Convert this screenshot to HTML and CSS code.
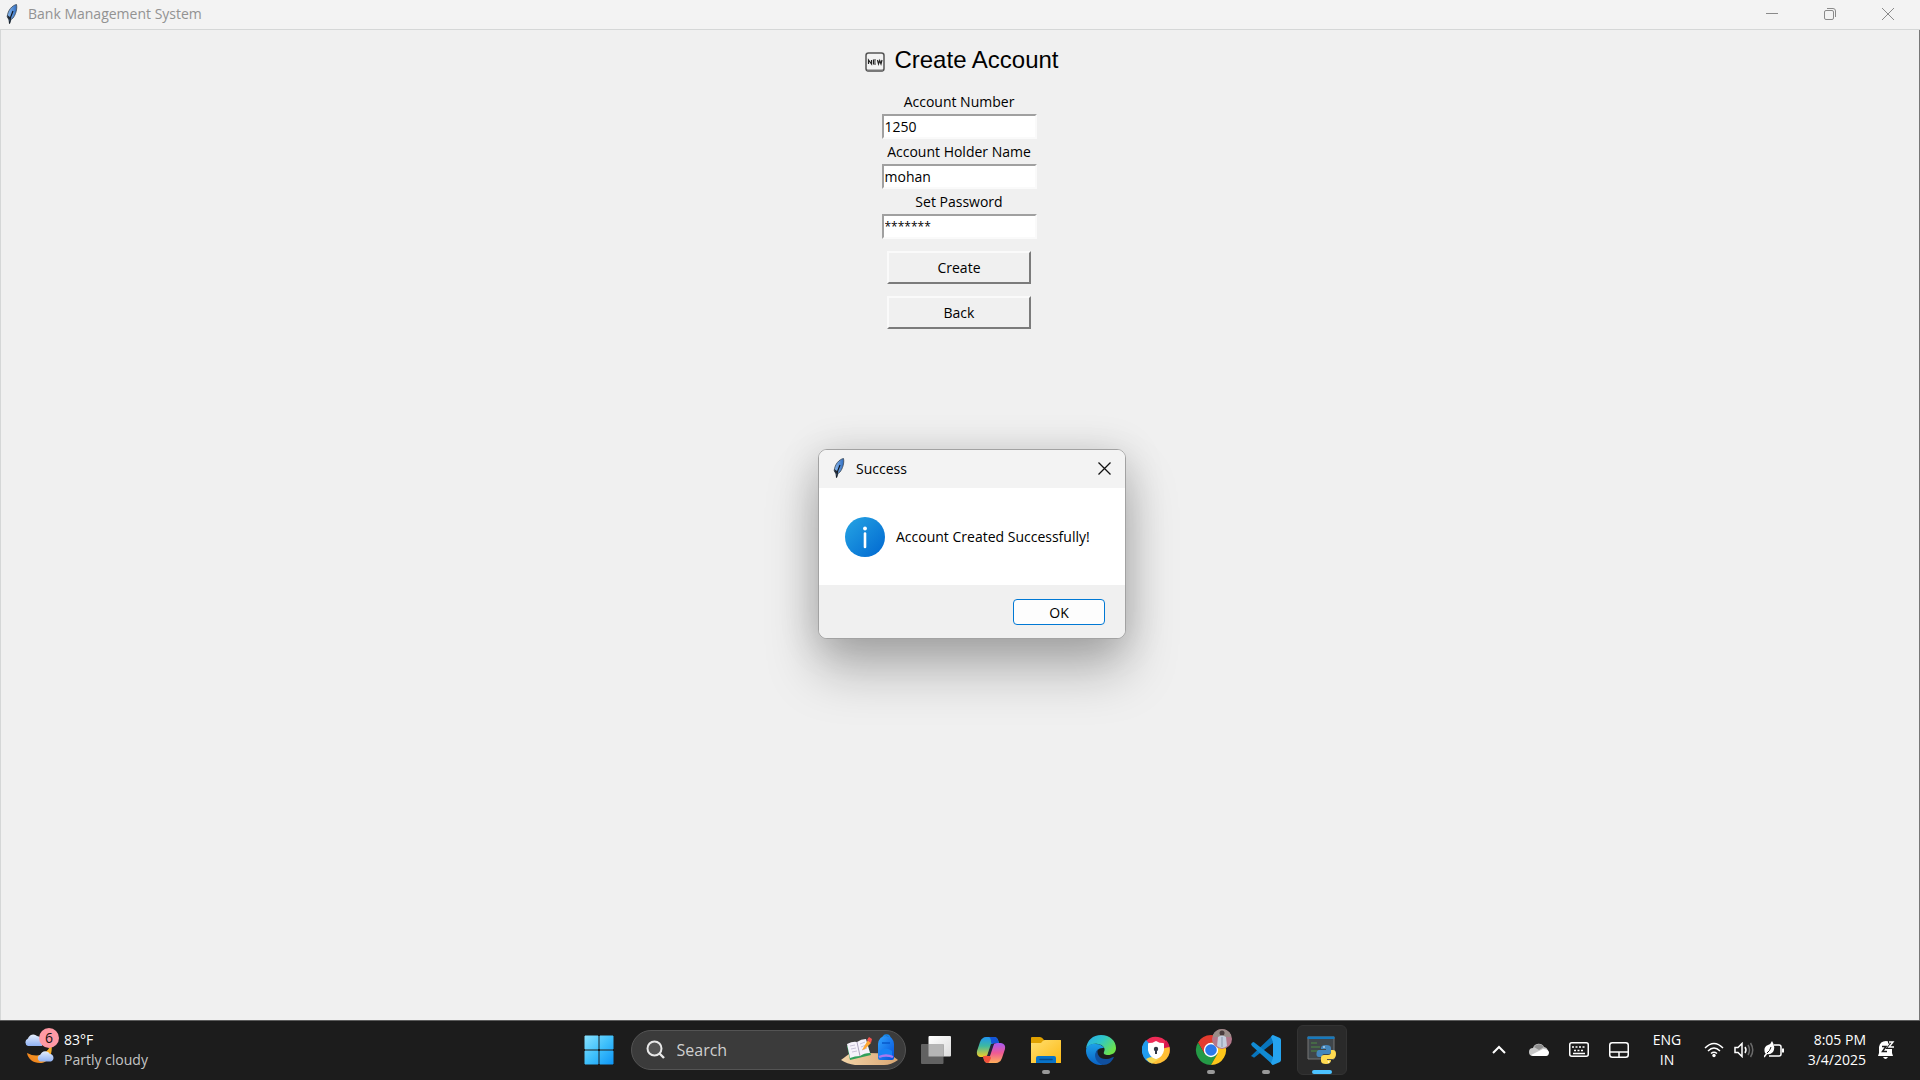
FILE: index.html
```html
<!DOCTYPE html>
<html lang="en">
<head>
<meta charset="utf-8">
<title>Bank Management System</title>
<link rel="stylesheet" href="styles.css">
</head>
<body>
<svg width="0" height="0" class="defs" aria-hidden="true">
  <defs>
    <linearGradient id="quill" x1="0" y1="0" x2="1" y2="0"><stop offset="0" stop-color="#8dbcf0"/><stop offset="1" stop-color="#2f6cc0"/></linearGradient>
    <symbol id="feather" viewBox="0 0 12 20">
      <path d="M10.500 .5C6 1.500 2 6 1.200 12.500L2.800 15.500 3.500 19.500 5 15.500 7 14C9.500 11 11.500 5 10.500 .5Z" fill="url(#quill)" stroke="#3a4654" stroke-width=".8"/>
      <path d="M7 7C5.500 10 4 14 3.500 19.500" fill="none" stroke="#10161e" stroke-width="1.200"/>
      <path d="M1.200 11 1.500 13.500 3 16 5 15 4 13Z" fill="#222a35"/>
    </symbol>
  </defs>
</svg>

<section class="window">
  <header class="titlebar">
    <svg class="feather" viewBox="0 0 12 20"><use href="#feather"/></svg>
    <span class="titlebar-name">Bank Management System</span>
    <div class="titlebar-controls">
      <button class="control" aria-label="Minimize"><svg width="12" height="12" viewBox="0 0 12 12"><path d="M0 5.500H12" /></svg></button>
      <button class="control" aria-label="Restore"><svg width="12" height="12" viewBox="0 0 12 12"><rect x=".5" y="2.500" width="9" height="9" rx="1.500"/><path d="M3 .5H9Q11.500 .5 11.500 3V9"/></svg></button>
      <button class="control" aria-label="Close"><svg width="12" height="12" viewBox="0 0 12 12"><path d="M0 0 12 12M12 0 0 12"/></svg></button>
    </div>
  </header>

  <main class="client">
    <h1 class="heading">
      <svg width="20" height="20" viewBox="0 0 20 20" aria-hidden="true">
        <rect x="1" y="1" width="18" height="18" rx="2.500" fill="#f3f3f3" stroke="#555" stroke-width="1.500"/>
        <path d="M2 18.500H18" stroke="#777" stroke-width="2"/>
        <path d="M3.500 12V8L6.500 12V8M11 8H8.500V12H11M8.500 10H10.800M12.500 8 13.500 12 14.700 8.500 16 12 17 8" fill="none" stroke="#222" stroke-width="1.200"/>
      </svg>
      <span class="heading-text">Create Account</span>
    </h1>
    <form class="form">
      <label for="number">Account Number</label>
      <input class="entry" id="number" type="text" value="1250">
      <label for="holder">Account Holder Name</label>
      <input class="entry" id="holder" type="text" value="mohan">
      <label for="password">Set Password</label>
      <input class="entry masked" id="password" type="text" value="*******">
      <button class="push" type="button">Create</button>
      <button class="push" type="button">Back</button>
    </form>
  </main>

  <section class="dialog" role="dialog" aria-labelledby="dialog-title">
    <header class="dialog-bar">
      <svg class="feather" viewBox="0 0 12 20"><use href="#feather"/></svg>
      <span id="dialog-title" class="dialog-title">Success</span>
      <button class="dialog-close" aria-label="Close"><svg width="13" height="13" viewBox="0 0 13 13"><path d="M.5 .5 12.500 12.500M12.500 .5 .5 12.500"/></svg></button>
    </header>
    <div class="dialog-body">
      <svg width="40" height="40" viewBox="0 0 40 40" aria-hidden="true">
        <defs><linearGradient id="info" x1="0" y1="0" x2="1" y2="1"><stop offset="0" stop-color="#26a5e4"/><stop offset="1" stop-color="#0067d0"/></linearGradient></defs>
        <circle cx="20" cy="20" r="20" fill="url(#info)"/><circle cx="20" cy="11.500" r="1.900" fill="#fff"/><path d="M20 16.500V30" stroke="#fff" stroke-width="2.600" stroke-linecap="round"/>
      </svg>
      <span>Account Created Successfully!</span>
    </div>
    <footer class="dialog-foot"><button class="ok">OK</button></footer>
  </section>
</section>

<nav class="taskbar">
  <div class="weather">
    <div class="weather-icon">
      <svg width="32" height="32" viewBox="0 0 32 32" aria-hidden="true">
        <defs><linearGradient id="cloud" x1="0" y1="0" x2="0" y2="1"><stop offset="0" stop-color="#e6effd"/><stop offset="1" stop-color="#8fb1f3"/></linearGradient>
        <linearGradient id="moon" x1="1" y1="0" x2="0" y2="1"><stop offset="0" stop-color="#f9c02c"/><stop offset="1" stop-color="#f07a1c"/></linearGradient></defs>
        <path d="M27 7C27 17 16 26 3 19 4 25 9 29 16 29 24 29 30 21 27 7Z" fill="url(#moon)"/>
        <path d="M4 12A4 4 0 0 1 4 4.500 5.500 5.500 0 0 1 13 2 6 6 0 0 1 18 6V12Z" fill="url(#cloud)"/>
        <path d="M16 27.500A3.700 3.700 0 0 1 16.500 20.500 5.200 5.200 0 0 1 26 20 3.900 3.900 0 0 1 27 27.500Z" fill="url(#cloud)"/>
      </svg>
      <span class="badge">6</span>
    </div>
    <div class="weather-text"><span>83°F</span><span class="dim">Partly cloudy</span></div>
  </div>

  <div class="apps">
    <button class="app" aria-label="Start"><svg width="30" height="30" viewBox="0 0 30 30">
      <defs><linearGradient id="win" gradientUnits="userSpaceOnUse" x1="0" y1="0" x2="30" y2="30"><stop offset="0" stop-color="#8be3ff"/><stop offset=".5" stop-color="#3fc0fb"/><stop offset="1" stop-color="#0c93f5"/></linearGradient></defs>
      <path d="M1 1H14V14H1ZM16 1H29V14H16ZM1 16H14V29H1ZM16 16H29V29H16Z" fill="url(#win)" stroke="url(#win)"/>
    </svg></button>
    <div class="search">
      <svg width="20" height="20" viewBox="0 0 20 20" aria-hidden="true"><circle cx="8.500" cy="8.500" r="7" fill="#555" stroke="#e8e8e8" stroke-width="2"/><path d="M13.500 13.500 18 18" stroke="#e8e8e8" stroke-width="2.400"/></svg>
      <input class="search-input" type="text" placeholder="Search" aria-label="Search">
      <svg width="58" height="32" viewBox="0 0 58 32" aria-hidden="true">
        <defs><linearGradient id="sand" x1="0" y1="0" x2="1" y2="0"><stop offset="0" stop-color="#f4d5a8"/><stop offset="1" stop-color="#d8a673"/></linearGradient>
        <linearGradient id="bag" x1="0" y1="0" x2="1" y2="1"><stop offset="0" stop-color="#30a4ff"/><stop offset="1" stop-color="#0550d8"/></linearGradient></defs>
        <path d="M0 26 8 20Q24 18 49 20L57 26Q50 31 43 31H14Q6 30 0 26Z" fill="url(#sand)"/>
        <path d="M6 12 25 7 30 21 9 26Z" fill="#31a05b"/><path d="M6 10Q12 7 16 8 20 5 25 5L29 19Q23 19 19 22 14 22 9 24Z" fill="#f5f2fb"/>
        <path d="M16 8 19 22" stroke="#aaa3bd" fill="none"/><path d="M9 12 14 11M10 15 15 14M11 18 16 17M19 10 24 8M20 13 25 11M21 16 26 14" stroke="#c9c3d8" fill="none"/>
        <path d="M21 16 27 6 30 9 24 15Z" fill="#ffa834"/><path d="M26 6 28 3 31 5 30 9Z" fill="#f2534d"/>
        <path d="M42 5Q42 1 45.500 1T49 5" fill="none" stroke="#168bf1" stroke-width="1.500"/><path d="M37 24V10Q38 2 45 2T53 10V24Q53 26 51 26H39Q37 26 37 24Z" fill="url(#bag)"/>
        <path d="M39 17Q45 12 51 17V22H39Z" fill="#1682f5"/><path d="M38 23Q45 20 52 23" fill="none" stroke="#a978ef" stroke-width="2.400"/><path d="M41 9H49" stroke="#0759ca" stroke-width="1.500"/>
      </svg>
    </div>
    <button class="app" aria-label="Task view"><svg width="30" height="30" viewBox="0 0 30 30">
      <defs><linearGradient id="tv" x1="0" y1="0" x2="1" y2="1"><stop offset="0" stop-color="#fff"/><stop offset="1" stop-color="#dcdcdc"/></linearGradient></defs>
      <rect x="7.500" y="1" width="22.500" height="20.500" rx="1" fill="url(#tv)"/><rect x="0" y="9" width="22.500" height="20" rx="1" fill="#626262"/><path d="M7.500 9H22.500V21.500H7.500Z" fill="#b5b5b5"/>
    </svg></button>
    <button class="app" aria-label="Copilot"><svg width="30" height="30" viewBox="0 0 30 30">
      <defs><linearGradient id="cpa" x1="0" y1="0" x2="0" y2="1"><stop offset="0" stop-color="#2195f2"/><stop offset=".45" stop-color="#3db9a0"/><stop offset="1" stop-color="#f4cc24"/></linearGradient>
      <linearGradient id="cpb" x1="0" y1="0" x2="0" y2="1"><stop offset="0" stop-color="#a65af5"/><stop offset=".5" stop-color="#ef5a94"/><stop offset="1" stop-color="#ffb05a"/></linearGradient></defs>
      <path d="M7 3Q8 2 10 2H18Q21 2 22 5L23 8H19Q16 8 15 11L12 20Q11 22 8 22H4Q0 21 1 16L4 7Q5 4 7 3Z" fill="url(#cpa)"/>
      <path d="M13 2H18Q21 2 22 5L23 8H19Q17 8 16 10L15 7Q15 3 13 2Z" fill="#1455d8"/>
      <path d="M23 27Q22 28 20 28H12Q9 28 8 25L7 21H9Q12 21 13 19L17 10Q18 8 21 8H25Q30 9 29 14L26 23Q25 26 23 27Z" fill="url(#cpb)"/>
      <path d="M7 21H9Q12 21 13 19L15 23Q13 28 12 28 9 28 8 25Z" fill="#f0503c"/><path d="M15 9 18 9 14 21 11 21Z" fill="#22243a"/>
    </svg></button>
    <button class="app running" aria-label="File Explorer"><svg width="30" height="30" viewBox="0 0 30 30">
      <defs><linearGradient id="fold" x1="0" y1="0" x2="1" y2="1"><stop offset="0" stop-color="#ffdf70"/><stop offset="1" stop-color="#fdb913"/></linearGradient></defs>
      <path d="M0 3Q0 2 1 2H9Q11 2 13 5H30V14H0Z" fill="#e0a100"/><path d="M0 8H10Q12 5 14 5H29Q30 5 30 6V28H0Z" fill="url(#fold)"/><path d="M5 28V23Q5 21 7 21H23Q25 21 25 23V28Z" fill="#0873c8"/><path d="M9 24.500H21" stroke="#064b8c" stroke-width="1.500" stroke-linecap="round"/>
    </svg></button>
    <button class="app" aria-label="Edge"><svg width="30" height="30" viewBox="0 0 30 30">
      <defs><linearGradient id="ea" x1="0" y1="0" x2="1" y2=".6"><stop offset="0" stop-color="#27a9ed"/><stop offset=".5" stop-color="#2fc6c7"/><stop offset="1" stop-color="#6de34a"/></linearGradient>
      <linearGradient id="eb" x1="0" y1="0" x2="0" y2="1"><stop offset="0" stop-color="#1ca0e8"/><stop offset="1" stop-color="#0a62c4"/></linearGradient></defs>
      <path d="M0 14C1 5 7 0 15 0 24 0 30 6 30 13 30 18 26 20 22 20 19 20 17 19 18 17 20 13 17 10 12 9 7 8 2 10 0 14Z" fill="url(#ea)"/>
      <path d="M0 16C0 11 5 8 10 9 14 9 17 11 18 13 11 12 8 19 11 24 12 27 15 29 17 30 8 31 0 24 0 16Z" fill="url(#eb)"/>
      <path d="M12 14C10 19 14 25 21 24 24 24 26 22 28 22 26 27 22 30 17 30 10 28 6 20 12 14Z" fill="#104f9e"/>
    </svg></button>
    <button class="app" aria-label="Secure browser"><svg width="28" height="28" viewBox="0 0 28 28">
      <path d="M3 6A14 14 0 0 1 27 10L14 13Z" fill="#ee2b57"/><path d="M24 4A14 14 0 0 1 27 18L20 14Z" fill="#d81850"/><path d="M27.500 11A14 14 0 0 1 7 26L14 14Z" fill="#ffbe35"/><path d="M10 27.500A14 14 0 0 1 4 4L14 14Z" fill="#209cee"/><path d="M4 23Q10 19 17 23L10 27.500Q7 27 4 23Z" fill="#f7d852"/>
      <path d="M7 8Q11 8 14 6 17 8 21 8V14Q20 20 14 22 8 20 7 14Z" fill="#fff" stroke="#fff" stroke-width="2" stroke-linejoin="round"/><circle cx="14" cy="13" r="2.200" fill="#303845"/><path d="M14 13V18" stroke="#303845" stroke-width="2"/>
    </svg></button>
    <button class="app running" aria-label="Chrome"><svg class="profiled" width="30" height="30" viewBox="4 8 30 30">
      <path d="M6 15.500A15 15 0 0 1 32 15.500H19L12.500 26.700Z" fill="#e33b2e"/><path d="M6 15.500A15 15 0 0 0 19 38L25.500 26.700H12.500Z" fill="#249a46"/><path d="M32 15.500A15 15 0 0 1 19 38L25.500 26.700 19 15.500Z" fill="#fdc61a"/>
      <circle cx="19" cy="23" r="7.200" fill="#fff"/><circle cx="19" cy="23" r="5.800" fill="#2b79ea"/>
      <circle cx="30" cy="12" r="10" fill="#b4788b"/><path d="M21 8A10 10 0 0 1 39 8V10H21Z" fill="#9a8d88"/><circle cx="30" cy="6" r="2.500" fill="#493d3d"/><path d="M26 10Q30 7 34 10L35 19Q30 23 25 19Z" fill="#c3cedd"/><path d="M30 10V20" stroke="#8795a9"/>
    </svg></button>
    <button class="app running" aria-label="Visual Studio Code"><svg width="30" height="30" viewBox="0 0 30 30">
      <path d="M1 20 22 0V8L4 22Q3 23 2 22L0 21Z" fill="#0875bd"/><path d="M0 9 2 7Q3 7 4 8L22 22V30L1 11Z" fill="#118bd3"/><path d="M22 0 29 3Q30 4 30 5V25Q30 26 29 27L22 30Q21 30 20 28L22 23V7L20 2Q21 0 22 0Z" fill="#25a3ee"/>
    </svg></button>
    <button class="app running active" aria-label="Python"><svg width="30" height="30" viewBox="0 0 30 30">
      <path d="M1 2H27V24H1Z" fill="#40464a" stroke="#777"/><path d="M.5 1.500H27.500V4H.5Z" fill="#1679bd"/><path d="M4 8H10M4 12H13M4 16H12" stroke="#4d8c42" stroke-width="1.200"/>
      <path d="M14 13Q14 10 19 10T24 13V17Q24 19 22 19H17Q15 19 15 22H12Q9 22 9.500 18 10 15 12 15H19V14H14Z" fill="#4386bd"/><path d="M24 15H26Q29 15 29 19T26 24H20V25H24Q24 29 19 29T14 26V23Q14 20 17 20H21Q24 20 24 17Z" fill="#ffda50"/><circle cx="17" cy="12" r=".8" fill="#fff"/><circle cx="21.500" cy="27" r=".8" fill="#fff"/>
    </svg></button>
  </div>

  <div class="tray">
    <button class="tray-item" aria-label="Show hidden icons"><svg width="14" height="9" viewBox="0 0 14 9"><path d="M1 8 7 2 13 8" class="line heavy"/></svg></button>
    <button class="tray-item" aria-label="OneDrive"><svg width="20" height="14" viewBox="0 0 20 14"><path d="M4 13A4 4 0 0 1 4 5 6 6 0 0 1 15 4 5 5 0 0 1 17 13Z" fill="#c8c8c8"/><path d="M5 4A6 6 0 0 1 15 4L10 7Z" fill="#8f8f8f"/><path d="M2 12 14 6Q19 6 20 9 20 13 17 13H4Z" fill="#fff"/></svg></button>
    <button class="tray-item" aria-label="Touch keyboard"><svg width="20" height="15" viewBox="0 0 20 15"><rect x=".75" y=".75" width="18.500" height="13.500" rx="2" class="line"/><path d="M3 5H17" class="line" stroke-dasharray="2 1.500"/><path d="M5 8.500H15" class="line" stroke-dasharray="2 1.500"/><path d="M4 11.500H16" class="line"/></svg></button>
    <button class="tray-item" aria-label="Touchpad"><svg width="20" height="16" viewBox="0 0 20 16"><rect x=".75" y=".75" width="18.500" height="14.500" rx="2.500" class="line"/><path d="M1 10H19M10 10V15" class="line"/></svg></button>
    <button class="language"><span>ENG</span><span>IN</span></button>
    <button class="status" aria-label="Network, sound and battery">
      <svg width="20" height="16" viewBox="0 0 20 16"><path d="M1 6Q10-3 19 6M4 9Q10 3 16 9M7 11.500Q10 9 13 11.500" class="line"/><circle cx="10" cy="13.500" r="1.700" fill="#fff"/></svg>
      <svg width="20" height="16" viewBox="0 0 20 16"><path d="M1 5.500H4L8 1.500V14.500L4 10.500H1Z" class="line"/><path d="M11 5Q13 8 11 11" class="line"/><path d="M14 3Q17 8 14 13M16.500 1Q21 8 16.500 15" class="line faint"/></svg>
      <svg width="20" height="17" viewBox="0 0 20 17"><path d="M10 4H15Q17 4 17 6V13Q17 15 15 15H5" class="line"/><path d="M18 7.500H20V11.500H18Z" fill="#fff"/><path d="M8 0Q12 6 9 11 5 15 1 12-1 6 4 4 7 3 8 0Z" fill="#fff"/><path d="M3 12Q6 10 7 6" stroke="#1c1c1c" fill="none"/><path d="M0 16 3 12" class="line"/></svg>
    </button>
    <button class="clock"><span>8:05 PM</span><span>3/4/2025</span></button>
    <button class="bell" aria-label="Notifications"><svg width="18" height="20" viewBox="0 0 18 20"><path d="M1 16 2 13V7Q3 1 9 1T15 7V13L16 16Z" fill="#fff"/><path d="M6 17Q8.500 21 11 17Z" fill="#fff"/><path d="M11 2H16L11.500 7.500H17" fill="none" stroke="#1c1c1c" stroke-width="3"/><path d="M5 6.500H9L5.500 11.500H10" fill="none" stroke="#1c1c1c" stroke-width="1.500"/><path d="M12 2H16L12 7H17" fill="none" stroke="#fff" stroke-width="1.400"/></svg></button>
  </div>
</nav>
</body>
</html>
```
FILE: styles.css
```css
* { box-sizing: border-box; }

html, body { height: 100%; }

body {
  margin: 0;
  display: flex;
  flex-direction: column;
  overflow: hidden;
  background: #f0f0f0;
  color: #000;
  font-family: "Open Sans", "Noto Sans", sans-serif;
  font-size: 14px;
}

button, input { font: inherit; color: inherit; }

button {
  border: 0;
  padding: 0;
  background: none;
}

svg { display: block; flex: none; }

.defs { position: absolute; }

/* Main window */
.window {
  position: relative;
  flex: 1;
  display: flex;
  flex-direction: column;
}

.titlebar {
  display: flex;
  align-items: center;
  height: 30px;
  padding: 0 3px 2px 6px;
  background: #f3f3f3;
  border-bottom: 1px solid #d5d7d7;
  color: #929292;
}

.feather { width: 12px; height: 20px; }

.titlebar-name { margin-left: 10px; }

.titlebar-controls { display: flex; margin-left: auto; }

.control {
  display: grid;
  place-items: center;
  width: 58px;
  height: 28px;
}

.control svg { fill: none; stroke: #8a8a8a; }

.client {
  flex: 1;
  display: flex;
  flex-direction: column;
  align-items: center;
  padding: 12px 2px 0 0;
  border-left: 1px solid #d5d7d7;
  border-right: 1px solid #777;
}

.heading {
  display: flex;
  align-items: center;
  gap: 9px;
  height: 40px;
  margin: 0;
  padding-left: 6px;
  font: 24px/36px "Liberation Sans", Arial, sans-serif;
}

.heading-text { padding-bottom: 4px; }

.form {
  display: flex;
  flex-direction: column;
  align-items: center;
  padding-top: 7px;
}

.form label { line-height: 25px; }

.entry {
  width: 155px;
  height: 25px;
  padding: 0 1px;
  background: #fff;
  border: 2px solid #fafafa;
  border-top-color: #a0a0a0;
  border-left-color: #a0a0a0;
  border-radius: 0;
}

.masked { font-size: 12px; }

.push {
  width: 144px;
  height: 33px;
  margin-top: 12px;
  background: #f0f0f0;
  border: 2px solid #7b7b7b;
  border-top-color: #fafafa;
  border-left-color: #fafafa;
}

/* Message box */
.dialog {
  position: absolute;
  top: 449px;
  left: calc(50% - 142px);
  width: 308px;
  overflow: hidden;
  background: #fff;
  border: 1px solid #a2a2a2;
  border-radius: 9px;
  box-shadow: 0 32px 52px rgba(0, 0, 0, .25), 0 4px 40px rgba(0, 0, 0, .16);
}

.dialog-bar {
  display: flex;
  align-items: center;
  height: 38px;
  padding: 0 14px 2px;
  background: #f3f3f3;
}

.dialog-title { margin-left: 11px; }

.dialog-close { margin-left: auto; }

.dialog-close svg { fill: none; stroke: #111; stroke-width: 1.3px; }

.dialog-body {
  display: flex;
  align-items: center;
  gap: 11px;
  height: 97px;
  padding-left: 26px;
}

.dialog-foot {
  display: flex;
  justify-content: flex-end;
  padding: 14px 20px 13px;
  background: #f0f0f0;
}

.ok {
  width: 92px;
  height: 26px;
  background: #fdfdfd;
  border: 1px solid #0078d4;
  border-radius: 4px;
}

/* Taskbar */
.taskbar {
  display: grid;
  grid-template-columns: 1fr auto 1fr;
  align-items: center;
  height: 60px;
  padding-bottom: 2px;
  background: #1c1c1c;
  border-top: 1px solid #5c5c5c;
  color: #fff;
  line-height: 20px;
}

.weather {
  display: flex;
  align-items: center;
  gap: 8px;
  padding-left: 24px;
}

.weather-icon { position: relative; }

.badge {
  position: absolute;
  top: -6px;
  left: 15px;
  width: 20px;
  height: 20px;
  border-radius: 50%;
  background: #ff99a4;
  color: #111;
  text-align: center;
}

.weather-text { display: flex; flex-direction: column; }

.dim { color: #c4c4c4; }

.apps { display: flex; align-items: center; }

.app {
  position: relative;
  display: grid;
  place-items: center;
  width: 55px;
  height: 50px;
}

.profiled { overflow: visible; }

.running::after {
  content: "";
  position: absolute;
  bottom: 1px;
  left: calc(50% - 4px);
  width: 8px;
  height: 4px;
  border-radius: 2px;
  background: #999;
}

.active {
  width: 50px;
  margin: 0 2px 0 3px;
  background: #2a2a2a;
  border: 1px solid #333;
  border-radius: 6px;
}

.active::after {
  bottom: 0;
  left: calc(50% - 10px);
  width: 20px;
  background: #4cc2ff;
}

.search {
  display: flex;
  align-items: center;
  width: 275px;
  height: 40px;
  margin: 0 3px 0 4px;
  padding: 0 6px 0 14px;
  background: #3b3b3b;
  border: 1px solid #545454;
  border-radius: 20px;
}

.search-input {
  flex: 1;
  min-width: 0;
  margin-left: 11px;
  padding: 0;
  background: none;
  border: 0;
  font-size: 16px;
}

.search-input::placeholder { color: #cfcfcf; opacity: 1; }

.tray {
  display: flex;
  align-items: center;
  justify-content: flex-end;
  padding-right: 25px;
}

.tray-item {
  display: grid;
  place-items: center;
  width: 40px;
  height: 40px;
}

.line { fill: none; stroke: #fff; stroke-width: 1.5px; }

.heavy { stroke-width: 2px; }

.faint { stroke: #6a6a6a; }

.language {
  width: 56px;
  display: flex;
  flex-direction: column;
  align-items: center;
}

.status {
  display: flex;
  align-items: center;
  gap: 10px;
  padding-left: 9px;
}

.clock {
  display: flex;
  flex-direction: column;
  align-items: flex-end;
  width: 82px;
}

.bell { padding-left: 11px; }
```
